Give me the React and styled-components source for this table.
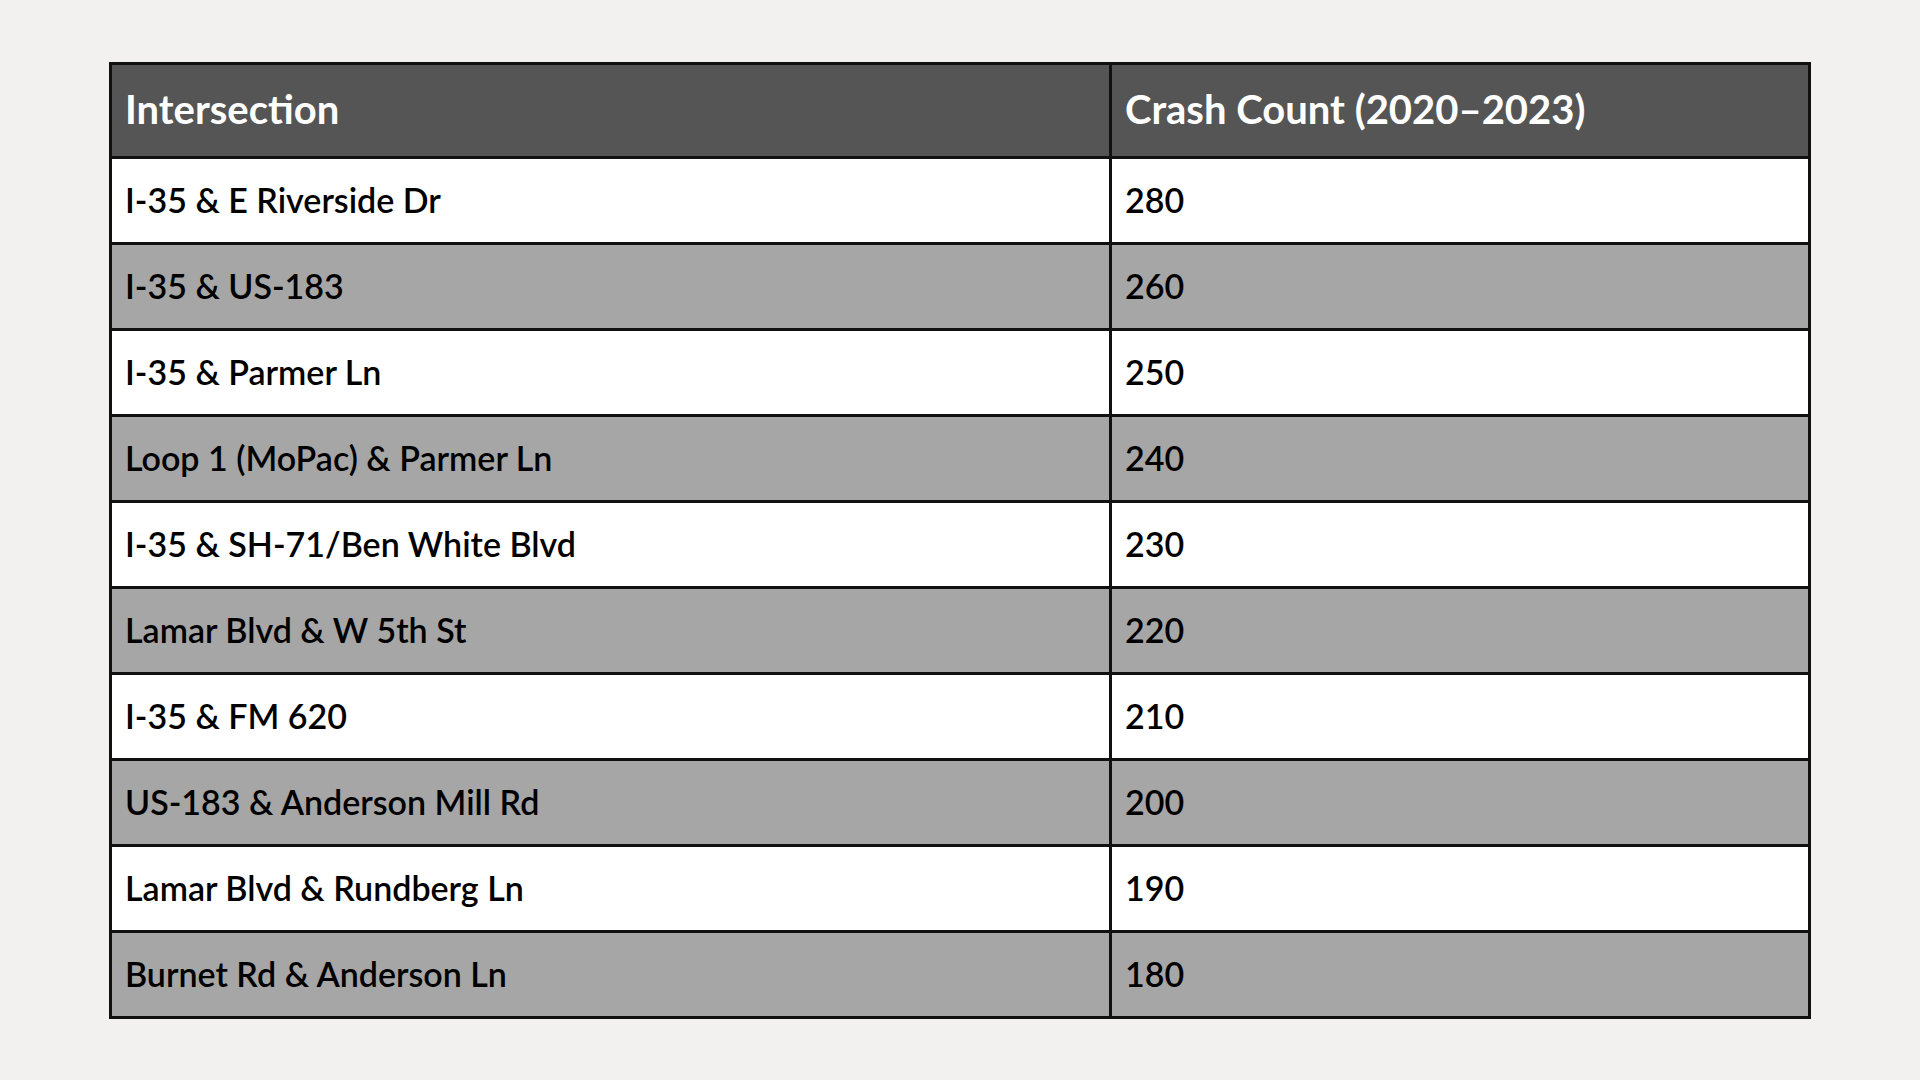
import React from "react";
import styled, { createGlobalStyle } from "styled-components";

const rows = [
  ["I-35 & E Riverside Dr", 280],
  ["I-35 & US-183", 260],
  ["I-35 & Parmer Ln", 250],
  ["Loop 1 (MoPac) & Parmer Ln", 240],
  ["I-35 & SH-71/Ben White Blvd", 230],
  ["Lamar Blvd & W 5th St", 220],
  ["I-35 & FM 620", 210],
  ["US-183 & Anderson Mill Rd", 200],
  ["Lamar Blvd & Rundberg Ln", 190],
  ["Burnet Rd & Anderson Ln", 180]
];

const GlobalStyle = createGlobalStyle`
  html, body {
    margin: 0;
    padding: 0;
    background: #f2f1ef;
  }
  body {
    font-family: Lato, "Liberation Sans", sans-serif;
  }
`;

const Page = styled.div`
  width: 100vw;
  height: 100vh;
  display: flex;
  align-items: center;
  justify-content: center;
`;

const Table = styled.table`
  width: 1702px;
  border-collapse: collapse;
  border: 3px solid #111;
`;

const HeadCell = styled.th`
  box-sizing: border-box;
  height: 94px;
  padding: 0 0 2px 13px;
  background: #555555;
  color: #ffffff;
  font-size: 40px;
  font-weight: 700;
  text-align: left;
  border: 3px solid #111;
  width: ${props => props.$w};
`;

const Row = styled.tr`
  background: ${props => (props.$shade ? "#a6a6a6" : "#ffffff")};
`;

const Cell = styled.td`
  box-sizing: border-box;
  height: 86px;
  padding: 0 0 2px 13px;
  color: #000;
  font-size: 34px;
  font-weight: 600;
  border: 3px solid #111;
`;

export default function App() {
  return (
    <>
      <GlobalStyle />
      <Page>
        <Table>
          <thead>
            <tr>
              <HeadCell $w="1000px">Intersection</HeadCell>
              <HeadCell>Crash Count (2020–2023)</HeadCell>
            </tr>
          </thead>
          <tbody>
            {rows.map(([name, count], i) => (
              <Row key={name} $shade={i % 2 === 1}>
                <Cell>{name}</Cell>
                <Cell>{count}</Cell>
              </Row>
            ))}
          </tbody>
        </Table>
      </Page>
    </>
  );
}
